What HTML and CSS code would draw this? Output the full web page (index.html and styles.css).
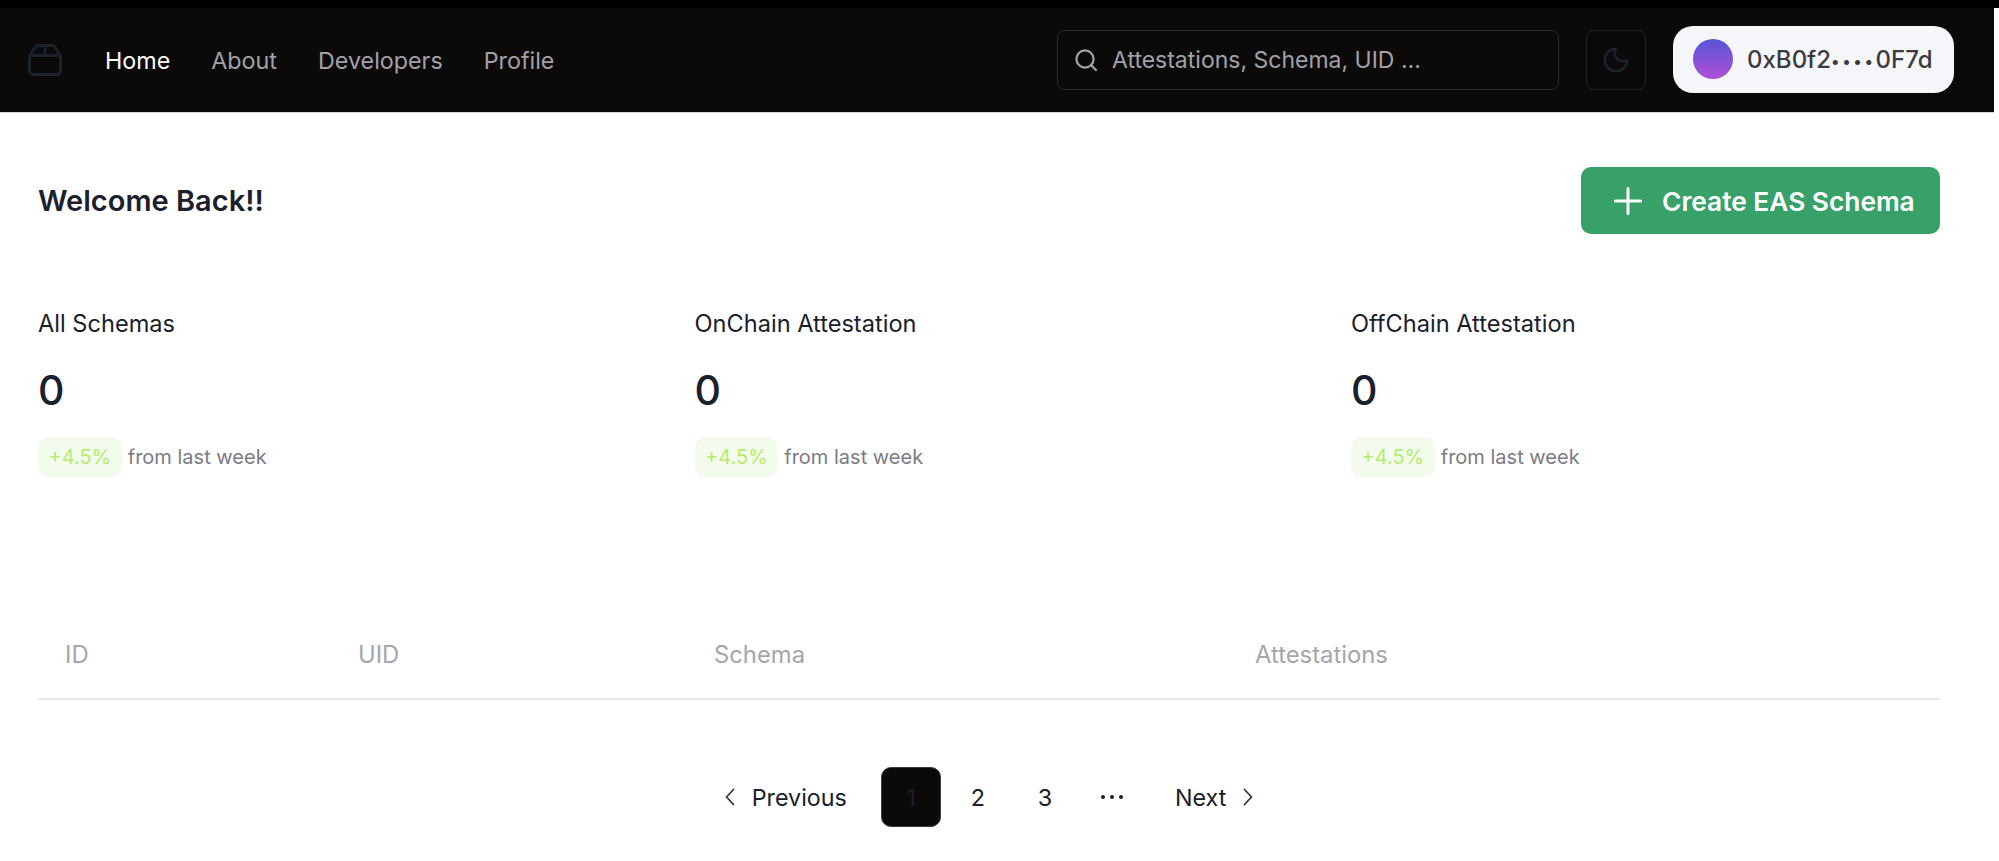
FILE: index.html
```html
<!DOCTYPE html>
<html>
<head>
  <title>EAS Schemas</title>
  <meta name="viewport" content="width=device-width, initial-scale=1.0">
  <link rel="stylesheet" href="styles.css">
</head>
<body>
  <nav class="navbar">
    <svg class="logo" viewBox="0 0 34 32" fill="none" stroke="#1a2230" stroke-width="3" stroke-linejoin="round" stroke-linecap="round">
      <path d="M1.5 11.5 7 3.5a3 3 0 0 1 2.4-2h15.2a3 3 0 0 1 2.4 2l5.5 8v15a4 4 0 0 1-4 4H5.5a4 4 0 0 1-4-4z"/>
      <path d="M1.5 11.5h31M17 1.5v10"/>
    </svg>
    <div class="nav-links">
      <a class="nav-link active">Home</a>
      <a class="nav-link">About</a>
      <a class="nav-link">Developers</a>
      <a class="nav-link">Profile</a>
    </div>
    <div class="search">
      <svg class="search-icon" viewBox="0 0 24 24" fill="none" stroke="#a3a3ab" stroke-width="2.2" stroke-linecap="round">
        <circle cx="11" cy="11" r="8.6"/>
        <path d="m17.5 17.5 4.5 4.5"/>
      </svg>
      <span>Attestations, Schema, UID ...</span>
    </div>
    <button class="theme-button">
      <svg class="moon" viewBox="0 0 24 24" fill="none" stroke="#1a2230" stroke-width="2" stroke-linecap="round" stroke-linejoin="round">
        <path d="M12 3a6.5 6.5 0 0 0 9 9 9 9 0 1 1-9-9z"/>
      </svg>
    </button>
    <div class="wallet">
      <span class="avatar"></span>
      <span class="address">0xB0f2<span class="address-dots">••••</span>0F7d</span>
    </div>
  </nav>

  <main class="content">
    <div class="title-row">
      <h1 class="title">Welcome Back!!</h1>
      <button class="create-button">
        <svg class="plus" viewBox="0 0 28 28" fill="none" stroke="#fff" stroke-width="3" stroke-linecap="round">
          <path d="M14 1.5v25M1.5 14h25"/>
        </svg>
        Create EAS Schema
      </button>
    </div>

    <div class="stats">
      <div class="stat">
        <div class="stat-label">All Schemas</div>
        <div class="stat-value">0</div>
        <div class="stat-change"><span class="badge">+4.5%</span> from last week</div>
      </div>
      <div class="stat">
        <div class="stat-label">OnChain Attestation</div>
        <div class="stat-value">0</div>
        <div class="stat-change"><span class="badge">+4.5%</span> from last week</div>
      </div>
      <div class="stat">
        <div class="stat-label">OffChain Attestation</div>
        <div class="stat-value">0</div>
        <div class="stat-change"><span class="badge">+4.5%</span> from last week</div>
      </div>
    </div>

    <table class="schema-table">
      <thead>
        <tr>
          <th class="col-id">ID</th>
          <th class="col-uid">UID</th>
          <th class="col-schema">Schema</th>
          <th>Attestations</th>
        </tr>
      </thead>
    </table>

    <div class="pagination">
      <a class="page-step">
        <svg class="chevron" viewBox="0 0 10 18" fill="none" stroke="#2d3748" stroke-width="1.8" stroke-linecap="round" stroke-linejoin="round"><path d="M8.5 1.5 1.5 9l7 7.5"/></svg>
        Previous
      </a>
      <a class="page-number current">1</a>
      <a class="page-number">2</a>
      <a class="page-number">3</a>
      <span class="page-dots">
        <svg viewBox="0 0 24 6" fill="#1a202c"><circle cx="3" cy="3" r="2"/><circle cx="12" cy="3" r="2"/><circle cx="21" cy="3" r="2"/></svg>
      </span>
      <a class="page-step">
        Next
        <svg class="chevron" viewBox="0 0 10 18" fill="none" stroke="#2d3748" stroke-width="1.8" stroke-linecap="round" stroke-linejoin="round"><path d="M1.5 1.5 8.5 9l-7 7.5"/></svg>
      </a>
    </div>
  </main>
</body>
</html>
```
FILE: styles.css
```css
html {
  background: linear-gradient(#000 8px, #fff 8px);
}
body {
  margin: 0;
  height: 861px;
  overflow: hidden;
  font-family: Inter, "Noto Sans", sans-serif;
  color: #1a202c;
}
.navbar {
  display: flex;
  align-items: center;
  box-sizing: border-box;
  width: 1994px;
  height: 105px;
  margin-top: 8px;
  padding: 0 40px 0 28px;
  background: #0c0a09;
  border-bottom: 1px solid #cbd5e0;
}
.logo {
  width: 34px;
  height: 32px;
}
.nav-links {
  display: flex;
  gap: 41px;
  margin-left: 43px;
}
.nav-link {
  font-size: 23.3px;
  font-weight: 400;
  color: #a1a1aa;
}
.nav-link.active {
  color: #fafaf9;
}
.search {
  display: flex;
  align-items: center;
  gap: 14px;
  box-sizing: border-box;
  width: 502px;
  height: 60px;
  margin-left: auto;
  padding-left: 16px;
  border: 1.5px solid #2e2e31;
  border-radius: 8px;
  font-size: 23px;
  color: #a1a1aa;
}
.search-icon {
  width: 24px;
  height: 24px;
}
.theme-button {
  display: flex;
  align-items: center;
  justify-content: center;
  box-sizing: border-box;
  width: 60px;
  height: 60px;
  margin-left: 27px;
  padding: 0;
  background: none;
  border: 1.5px solid #232325;
  border-radius: 8px;
}
.moon {
  width: 30px;
  height: 30px;
}
.wallet {
  display: flex;
  align-items: center;
  gap: 14px;
  box-sizing: border-box;
  width: 281px;
  height: 67px;
  margin-left: 27px;
  margin-top: -2px;
  padding-left: 20px;
  background: #f5f6f9;
  border-radius: 20px;
}
.avatar {
  width: 40px;
  height: 40px;
  border-radius: 50%;
  background: linear-gradient(#5655d6, #b04fd8);
}
.address {
  font-size: 24px;
  font-weight: 500;
  color: #3c3c40;
}
.address-dots {
  font-size: 16px;
  letter-spacing: 2.6px;
  vertical-align: 1px;
}
.content {
  padding: 54px 59px 0 38px;
}
.title-row {
  display: flex;
  justify-content: space-between;
  align-items: center;
}
.title {
  margin: 0;
  font-size: 29px;
  font-weight: 600;
}
.create-button {
  display: flex;
  align-items: center;
  gap: 20px;
  box-sizing: border-box;
  width: 359px;
  height: 67px;
  padding: 1px 0 0 33px;
  border: none;
  border-radius: 10px;
  background: #38a169;
  color: #fff;
  font-family: inherit;
  font-size: 26.3px;
  font-weight: 600;
}
.plus {
  width: 28px;
  height: 28px;
}
.stats {
  display: grid;
  grid-template-columns: repeat(3, 656.5px);
  margin-top: 76px;
}
.stat-label {
  font-size: 23.6px;
  font-weight: 400;
  line-height: 28px;
}
.stat-value {
  margin-top: 28px;
  font-size: 41px;
  font-weight: 500;
  line-height: 48px;
}
.stat-change {
  display: flex;
  align-items: center;
  gap: 6px;
  margin-top: 23px;
  font-size: 20px;
  color: #7b7b84;
}
.badge {
  padding: 0 10.5px;
  line-height: 40px;
  border-radius: 10px;
  background: #f3fbec;
  color: #b4ec6e;
}
.schema-table {
  width: 100%;
  margin-top: 152px;
  border-collapse: collapse;
  table-layout: fixed;
}
.schema-table th {
  box-sizing: border-box;
  height: 70px;
  padding: 0 0 18px 27px;
  border-bottom: 2px solid #e2e8f0;
  text-align: left;
  font-size: 23.8px;
  font-weight: 400;
  color: #a5a5ae;
}
.col-id {
  width: 293px;
}
.col-uid {
  width: 356px;
}
.col-schema {
  width: 541px;
}
.pagination {
  display: flex;
  justify-content: center;
  align-items: center;
  margin-top: 67px;
  font-size: 23.3px;
  font-weight: 400;
}
.page-step {
  display: flex;
  align-items: center;
  gap: 17px;
}
.chevron {
  width: 10px;
  height: 18px;
}
.page-number {
  display: flex;
  align-items: center;
  justify-content: center;
  box-sizing: border-box;
  width: 60px;
  height: 60px;
  margin-right: 7px;
}
.page-number.current {
  margin-left: 34px;
  background: #0c0a09;
  border: 1px solid #3b3b3d;
  border-radius: 10px;
}
.page-dots {
  display: flex;
  justify-content: center;
  width: 60px;
  margin-right: 33px;
}
.page-dots svg {
  width: 24px;
  height: 6px;
}
```
